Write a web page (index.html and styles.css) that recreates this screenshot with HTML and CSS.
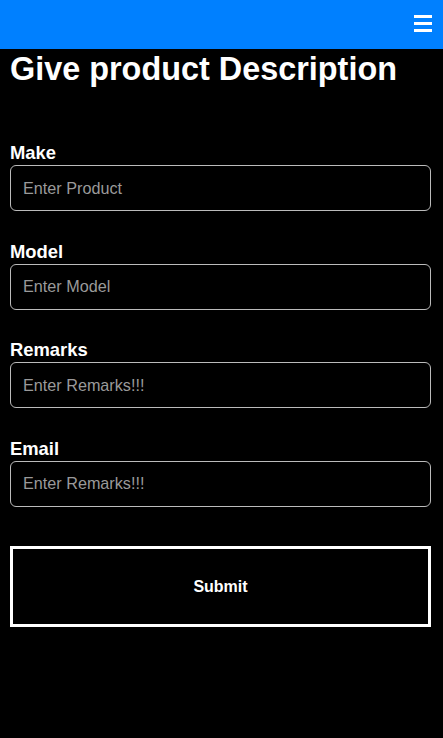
FILE: index.html
```html
<!DOCTYPE html>
<html lang="en">
<head>
    <meta charset="UTF-8">
    <meta name="viewport" content="width=device-width, initial-scale=1.0">
    <title>Product Description</title>
    <link rel="stylesheet" href="styles.css">
</head>
<body>
    <nav class="topbar">
        <button class="menu-btn" type="button" aria-label="Menu">
            <svg width="18" height="18" viewBox="0 0 18 18">
                <rect x="0" y="1" width="18" height="3" fill="#fff"/>
                <rect x="0" y="8" width="18" height="3" fill="#fff"/>
                <rect x="0" y="15" width="18" height="3" fill="#fff"/>
            </svg>
        </button>
    </nav>
    <main class="content">
        <h1>Give product Description</h1>
        <form id="productForm" class="product-form">
            <div class="field">
                <label for="make">Make</label>
                <input type="text" id="make" placeholder="Enter Product">
            </div>
            <div class="field">
                <label for="model">Model</label>
                <input type="text" id="model" placeholder="Enter Model">
            </div>
            <div class="field">
                <label for="remarks">Remarks</label>
                <input type="text" id="remarks" placeholder="Enter Remarks!!!">
            </div>
            <div class="field">
                <label for="email">Email</label>
                <input type="text" id="email" placeholder="Enter Remarks!!!">
            </div>
            <button type="button" class="submit-btn">Submit</button>
        </form>
    </main>
</body>
</html>
```

FILE: styles.css
```css
html, body {
    height: 100%;
}

body {
    margin: 0;
    background-color: #000;
    color: #fff;
    font-family: "Liberation Sans", Arial, sans-serif;
}

.topbar {
    height: 49px;
    background-color: #0080ff;
    display: flex;
    justify-content: flex-end;
    align-items: flex-start;
}

.menu-btn {
    background: none;
    border: none;
    padding: 0;
    margin: 14px 11px 0 0;
    width: 18px;
    height: 18px;
    cursor: pointer;
}

.menu-btn svg {
    display: block;
}

.content {
    padding: 0 12px 0 10px;
}

h1 {
    font-size: 32.4px;
    line-height: 37px;
    margin: 2px 0 0;
}

.product-form {
    display: flex;
    flex-direction: column;
    gap: 29.6px;
    margin-top: 54px;
}

.field {
    display: flex;
    flex-direction: column;
    gap: 2px;
}

label {
    font-weight: bold;
    font-size: 18.4px;
    line-height: 21px;
}

input[type="text"] {
    height: 46px;
    box-sizing: border-box;
    padding: 0 12px;
    background-color: #000;
    color: #fff;
    border: 1px solid #bbb;
    border-radius: 6px;
    font-family: "Liberation Sans", Arial, sans-serif;
    font-size: 16.2px;
}

input::placeholder {
    color: #9a9a9a;
}

.submit-btn {
    margin-top: 10px;
    height: 81px;
    background-color: #000;
    color: #fff;
    border: 3px solid #fff;
    font-family: "Liberation Sans", Arial, sans-serif;
    font-weight: bold;
    font-size: 16px;
    cursor: pointer;
}
```
